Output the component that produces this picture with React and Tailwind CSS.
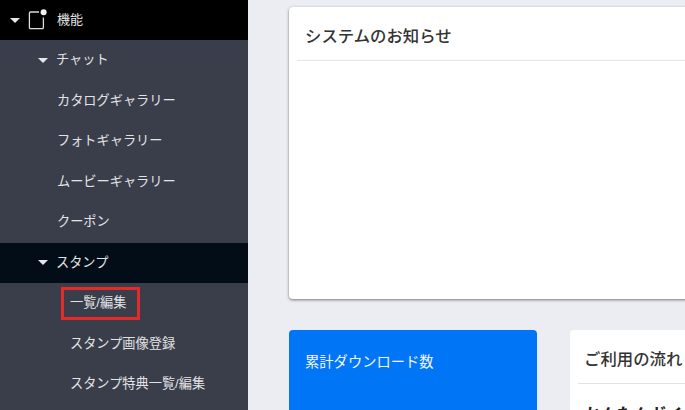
import React from 'react';

const Caret = ({ className = '' }) => (
  <svg viewBox="0 0 10 5" className={`w-[10px] h-[5px] shrink-0 ${className}`}>
    <path d="M0 0h10L5 5z" fill="#e8e8ea" />
  </svg>
);

const FeatureIcon = () => (
  <svg viewBox="0 0 20 21" className="w-[20px] h-[21px] shrink-0 ml-[8px] mb-[2px]" fill="none">
    <path d="M11 3H2.6A1.2 1.2 0 0 0 1.4 4.2v14.2a1.2 1.2 0 0 0 1.2 1.2h11.6a1.2 1.2 0 0 0 1.2-1.2V8.5" stroke="#dcdcdf" strokeWidth="1.3" />
    <circle cx="15.6" cy="3.2" r="3" fill="#f2f2f2" />
  </svg>
);

const Row = ({ children, className = '' }) => (
  <div className={`h-[40.5px] flex items-center text-[13.2px] text-[#e2e3e6] ${className}`}>{children}</div>
);

const Sidebar = () => (
  <aside className="w-[248px] shrink-0 h-full bg-[#3a3d4a] overflow-hidden">
    <div className="h-[40px] bg-black flex items-center pl-[10px] text-[#e2e3e6]">
      <Caret />
      <FeatureIcon />
      <span className="ml-[9px] text-[13px]">機能</span>
    </div>
    <Row className="pl-[38px]"><Caret /><span className="ml-[8px]">チャット</span></Row>
    <Row className="pl-[57px]">カタログギャラリー</Row>
    <Row className="pl-[57px]">フォトギャラリー</Row>
    <Row className="pl-[57px]">ムービーギャラリー</Row>
    <Row className="pl-[57px]">クーポン</Row>
    <Row className="pl-[38px] bg-[#030d17]"><Caret /><span className="ml-[8px]">スタンプ</span></Row>
    <Row className="pl-[70px] relative">
      一覧/編集
      <span className="absolute left-[61px] top-[4px] w-[79px] h-[33px] border-[3px] border-[#e32b2b]" />
    </Row>
    <Row className="pl-[70px]">スタンプ画像登録</Row>
    <Row className="pl-[70px]">スタンプ特典一覧/編集</Row>
  </aside>
);

export default function App() {
  return (
    <div
      className="w-[685px] h-[410px] flex overflow-hidden bg-[#ecedf3]"
      style={{ fontFamily: '"Liberation Sans", "Noto Sans CJK JP", sans-serif' }}
    >
      <Sidebar />
      <main className="w-[700px] shrink-0 pl-[41px] pt-[7px]">
        <section className="h-[292px] bg-white rounded-[4px] shadow-[0_1px_3px_rgba(0,0,0,0.5)] px-[8px]">
          <h2 className="h-[54px] border-b border-[#e6e6e8] pl-[8px] pt-[18px] text-[16.4px] leading-[22px] font-medium text-[#333333]">システムのお知らせ</h2>
        </section>
        <div className="flex gap-[33px] mt-[31px]">
          <section className="w-[248px] h-[120px] shrink-0 bg-[#0075f6] rounded-[4px] pl-[16px] pt-[22px] text-[14.3px] leading-[20px] text-[#f2f7ff]">
            累計ダウンロード数
          </section>
          <section className="w-[400px] h-[120px] shrink-0 bg-white rounded-[4px] px-[8px]">
            <h2 className="h-[54px] border-b border-[#e2e2e4] pl-[6px] pt-[18px] text-[16.4px] leading-[22px] font-medium text-[#333333]">ご利用の流れ</h2>
            <p className="pl-[6px] pt-[19px] text-[16.4px] leading-[22px] font-bold text-[#222222]">かんたんガイド</p>
          </section>
        </div>
      </main>
    </div>
  );
}
